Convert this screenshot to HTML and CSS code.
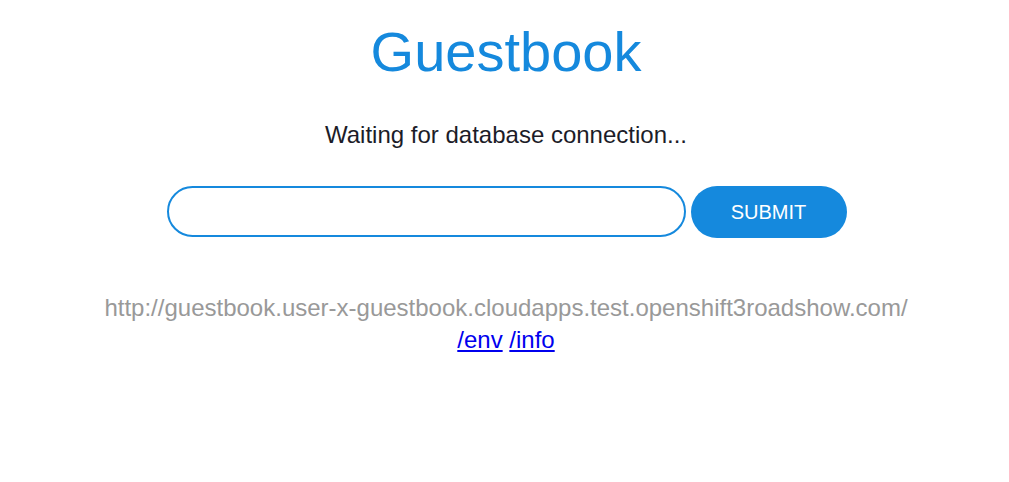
FILE: index.html
```html
<!DOCTYPE html>
<html>
<head>
<meta charset="utf-8">
<link rel="stylesheet" href="styles.css">
</head>
<body>
<main class="page">
  <h1 class="title">Guestbook</h1>
  <p class="status">Waiting for database connection...</p>
  <form class="entry">
    <input class="entry-input" type="text">
    <button class="entry-button" type="button">SUBMIT</button>
  </form>
  <div class="footer">
    <div class="host">http://guestbook.user-x-guestbook.cloudapps.test.openshift3roadshow.com/</div>
    <div class="links"><a href="#">/env</a> <a href="#">/info</a></div>
  </div>
</main>
</body>
</html>
```
FILE: styles.css
```css
html, body {
  margin: 0;
  padding: 0;
  background: #fff;
}
body {
  font-family: "Liberation Sans", Arial, sans-serif;
}
.page {
  display: flex;
  flex-direction: column;
  align-items: center;
  padding-top: 18px;
  padding-left: 3px;
}
.title {
  margin: 0;
  font-size: 56px;
  font-weight: normal;
  line-height: 68px;
  color: #1589dd;
}
.status {
  margin: 35px 0 0;
  font-size: 24px;
  line-height: 28px;
  color: #1c1c28;
}
.entry {
  display: flex;
  align-items: flex-start;
  gap: 5px;
  margin-top: 37px;
  margin-left: 1px;
}
.entry-input {
  box-sizing: border-box;
  width: 519px;
  height: 51px;
  border: 2px solid #1589dd;
  border-radius: 26px;
  outline: none;
  padding: 0 20px;
  font-size: 20px;
  font-family: inherit;
}
.entry-button {
  box-sizing: border-box;
  width: 156px;
  height: 52px;
  border: none;
  border-radius: 26px;
  background: #1589dd;
  color: #fff;
  font-family: inherit;
  font-size: 20px;
}
.footer {
  margin-top: 54px;
  text-align: center;
  font-size: 24px;
  line-height: 32px;
}
.host {
  color: #999;
}
.links a {
  color: #0000ee;
}
```
